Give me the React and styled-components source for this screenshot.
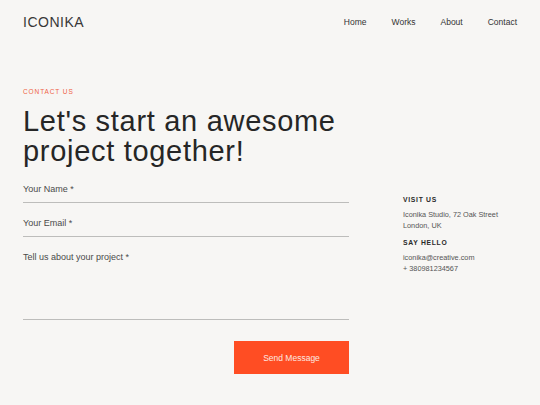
import React from "react";
import styled, { createGlobalStyle } from "styled-components";

const Global = createGlobalStyle`
  html, body { margin: 0; padding: 0; background: #f7f6f4; }
  body { font-family: "Liberation Sans", Arial, sans-serif; color: #222; }
  * { box-sizing: border-box; }
`;

const Page = styled.div`
  width: 540px;
  height: 405px;
  background: #f7f6f4;
  overflow: hidden;
`;

const Header = styled.header`
  display: flex;
  align-items: center;
  justify-content: space-between;
  padding: 0 23px;
  height: 43px;
`;

const Logo = styled.div`
  font-family: "Liberation Sans", Arial, sans-serif;
  font-size: 14px;
  letter-spacing: 0.5px;
  color: #383838;
`;

const Nav = styled.nav`
  display: flex;
  gap: 25px;
  padding-top: 1px;
`;

const NavLink = styled.a`
  font-family: "Liberation Sans", Arial, sans-serif;
  font-size: 8.5px;
  color: #333;
  text-decoration: none;
`;

const Main = styled.main`
  padding: 44px 23px 0;
  display: grid;
  grid-template-columns: 326px 1fr;
  column-gap: 54px;
`;

const Left = styled.div`
  display: flex;
  flex-direction: column;
`;

const Eyebrow = styled.div`
  font-size: 6.5px;
  letter-spacing: 0.9px;
  color: #ef6446;
  line-height: 10px;
`;

const Title = styled.h1`
  margin: 9px 0 0;
  font-family: "Liberation Sans", Arial, sans-serif;
  font-weight: 400;
  font-size: 29px;
  letter-spacing: 0.7px;
  line-height: 30px;
  color: #262626;
  width: 345px;
`;

const Form = styled.form`
  margin-top: 17px;
  display: flex;
  flex-direction: column;
`;

const Field = styled.div`
  border-bottom: 1px solid #bdbdbb;
  height: ${(p) => p.$h}px;
  margin-top: ${(p) => p.$mt || 0}px;
`;

const Label = styled.div`
  font-size: 9px;
  line-height: 12px;
  color: #4a4a4a;
`;

const Actions = styled.div`
  display: flex;
  justify-content: flex-end;
  margin-top: 21px;
`;

const Button = styled.button`
  width: 115px;
  height: 33px;
  border: none;
  background: #ff4d23;
  color: #fde9e2;
  font-family: "Liberation Sans", Arial, sans-serif;
  font-size: 8.5px;
  cursor: pointer;
`;

const Aside = styled.aside`
  padding-top: 108px;
  display: flex;
  flex-direction: column;
`;

const InfoTitle = styled.div`
  font-size: 6.8px;
  font-weight: 700;
  letter-spacing: 0.7px;
  color: #2a2a2a;
  line-height: 10px;
  margin-top: ${(p) => p.$mt || 0}px;
  margin-bottom: 4px;
`;

const InfoText = styled.div`
  font-size: 7.3px;
  line-height: 11px;
  color: #555;
`;

export default function App() {
  return (
    <Page>
      <Global />
      <Header>
        <Logo>ICONIKA</Logo>
        <Nav>
          <NavLink href="#">Home</NavLink>
          <NavLink href="#">Works</NavLink>
          <NavLink href="#">About</NavLink>
          <NavLink href="#">Contact</NavLink>
        </Nav>
      </Header>
      <Main>
        <Left>
          <Eyebrow>CONTACT US</Eyebrow>
          <Title>Let's start an awesome project together!</Title>
          <Form onSubmit={(e) => e.preventDefault()}>
            <Field $h={20}>
              <Label>Your Name *</Label>
            </Field>
            <Field $h={20} $mt={14}>
              <Label>Your Email *</Label>
            </Field>
            <Field $h={69} $mt={14}>
              <Label>Tell us about your project *</Label>
            </Field>
            <Actions>
              <Button type="submit">Send Message</Button>
            </Actions>
          </Form>
        </Left>
        <Aside>
          <InfoTitle>VISIT US</InfoTitle>
          <InfoText>Iconika Studio, 72 Oak Street</InfoText>
          <InfoText>London, UK</InfoText>
          <InfoTitle $mt={7}>SAY HELLO</InfoTitle>
          <InfoText>iconika@creative.com</InfoText>
          <InfoText>+ 380981234567</InfoText>
        </Aside>
      </Main>
    </Page>
  );
}
